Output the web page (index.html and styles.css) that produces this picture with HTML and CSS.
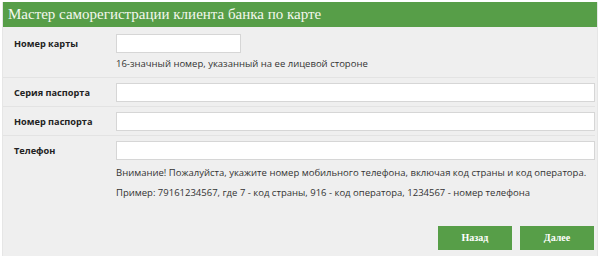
FILE: index.html
```html
<!DOCTYPE html>
<html lang="ru">
<head>
	<meta charset="UTF-8">
	<title>Мастер саморегистрации</title>
	<link rel="stylesheet" href="styles.css">
</head>
<body>
	<div class="panel">
		<div class="panel-head">Мастер саморегистрации клиента банка по карте</div>
		<div class="form">
			<div class="row row-first">
				<label class="label">Номер карты</label>
				<div class="field">
					<input type="text" class="input input-short">
					<p class="hint">16-значный номер, указанный на ее лицевой стороне</p>
				</div>
			</div>
			<div class="row">
				<label class="label">Серия паспорта</label>
				<div class="field"><input type="text" class="input"></div>
			</div>
			<div class="row">
				<label class="label">Номер паспорта</label>
				<div class="field"><input type="text" class="input"></div>
			</div>
			<div class="row row-last">
				<label class="label">Телефон</label>
				<div class="field">
					<input type="text" class="input">
					<p class="hint">Внимание! Пожалуйста, укажите номер мобильного телефона, включая код страны и код оператора.</p>
					<p class="hint">Пример: 79161234567, где 7 - код страны, 916 - код оператора, 1234567 - номер телефона</p>
				</div>
			</div>
			<div class="buttons">
				<a href="#" class="btn">Назад</a>
				<a href="#" class="btn">Далее</a>
			</div>
		</div>
	</div>
</body>
</html>
```

FILE: styles.css
```css
body{ margin: 0; background: #fff; font-family: "Open Sans", "Noto Sans", sans-serif;}
.panel{
	margin: 2px 2px 0 2px; height: 254px; background: #efefef;
	border-left: 1px solid #e6e6e6; border-right: 1px solid #e6e6e6;
}
.panel-head{
	height: 25px; line-height: 25px; padding-left: 5px; background: #579e48;
	color: #f4f8ee; font-family: "Liberation Serif", serif; font-size: 15px;
}
.form{ padding: 0 2px 0 0;}
.row{
	display: flex; padding: 5px 0 4px; border-bottom: 1px solid #e3e3e3;
}
.row-first{ padding-top: 7px; padding-bottom: 6px;}
.row-last{ border-bottom: none;}
.label{
	width: 102px; padding-left: 11px; flex: none;
	font-size: 9.2px; font-weight: bold; color: #222; line-height: 19px;
}
.field{ flex: 1;}
.input{
	display: block; box-sizing: border-box; width: 100%; height: 19px; margin: 0;
	border: 1px solid #d6d6d6; background: #fff; outline: none;
}
.input-short{ width: 125px;}
.hint{ margin: 4px 0 0; font-size: 9.5px; line-height: 14px; color: #333;}
.row-last .hint{ margin-top: 6px;}
.buttons{
	display: flex; justify-content: flex-end; gap: 8px; padding: 22px 1px 0 0;
}
.btn{
	width: 74px; height: 24px; line-height: 24px; text-align: center;
	background: #579e48; color: #fff; text-decoration: none;
	font-family: "Liberation Serif", serif; font-size: 10px; font-weight: bold;
}
```
